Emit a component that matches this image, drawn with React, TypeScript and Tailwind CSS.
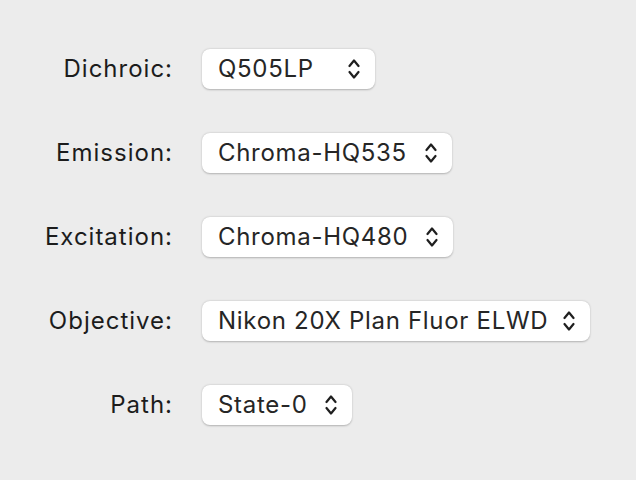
const rows = [
  { label: 'Dichroic:', value: 'Q505LP', width: 'w-[173px]' },
  { label: 'Emission:', value: 'Chroma-HQ535', width: 'w-[250px]' },
  { label: 'Excitation:', value: 'Chroma-HQ480', width: 'w-[251px]' },
  { label: 'Objective:', value: 'Nikon 20X Plan Fluor ELWD', width: 'w-[388px]' },
  { label: 'Path:', value: 'State-0', width: 'w-[150px]' },
];

function Chevrons() {
  return (
    <svg width="12" height="22" viewBox="0 0 12 22" fill="none" className="shrink-0">
      <path d="M1.5 8 L6 2.5 L10.5 8" stroke="#1f1f1f" strokeWidth="2.2" strokeLinecap="round" strokeLinejoin="round" />
      <path d="M1.5 14 L6 19.5 L10.5 14" stroke="#1f1f1f" strokeWidth="2.2" strokeLinecap="round" strokeLinejoin="round" />
    </svg>
  );
}

export default function App() {
  return (
    <div
      className="w-[636px] h-[480px] bg-[#ececec] overflow-hidden"
      style={{ fontFamily: 'Inter, "Liberation Sans", sans-serif' }}
    >
      <div className="grid grid-cols-[173px_auto] gap-x-[29px] gap-y-[44px] pt-[49px] justify-start">
        {rows.map((row) => (
          <div key={row.label} className="contents">
            <div className="h-10 flex items-center justify-end text-[24px] text-[#1c1c1c] tracking-[1px] whitespace-nowrap">
              {row.label}
            </div>
            <div
              className={`${row.width} h-10 flex items-center justify-between pl-4 pr-[15px] rounded-[8px] bg-white shadow-[0_0.5px_2px_rgba(0,0,0,0.25)] text-[24px] text-[#262626] tracking-[0.7px]`}
            >
              <span className="whitespace-nowrap">{row.value}</span>
              <Chevrons />
            </div>
          </div>
        ))}
      </div>
    </div>
  );
}
